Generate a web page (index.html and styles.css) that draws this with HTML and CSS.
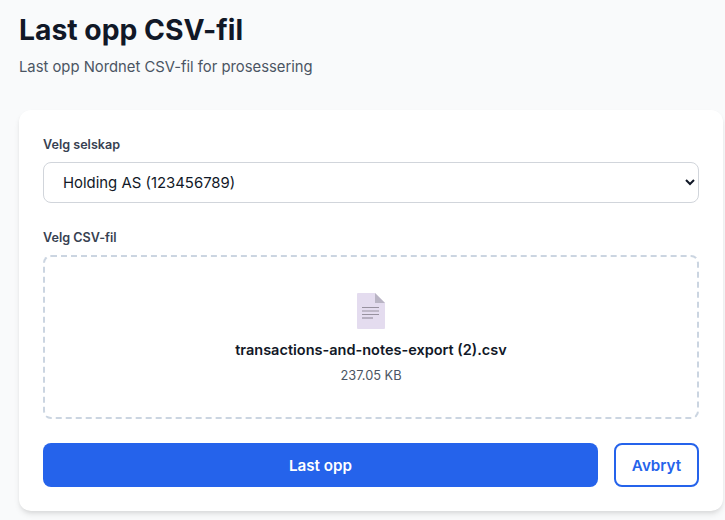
FILE: index.html
```html
<!DOCTYPE html>
<html lang="en">
<head>
  <meta charset="UTF-8">
  <meta name="viewport" content="width=device-width, initial-scale=1.0">
  <title>Last opp CSV-fil</title>
  <link rel="stylesheet" href="styles.css">
</head>
<body>

<div class="page">
  <h1 class="title">Last opp CSV-fil</h1>
  <p class="subtitle">Last opp Nordnet CSV-fil for prosessering</p>

  <form class="card">
    <div class="field">
      <label class="label" for="company">Velg selskap</label>
      <select class="select" id="company">
        <option>Holding AS (123456789)</option>
      </select>
    </div>

    <div class="field">
      <span class="label">Velg CSV-fil</span>
      <div class="dropzone">
        <svg class="file-icon" viewBox="0 0 28 36" aria-hidden="true">
          <path d="M0 1a1 1 0 0 1 1-1h17l10 10v25a1 1 0 0 1-1 1H1a1 1 0 0 1-1-1z" fill="#e4dcef"/>
          <path d="M18 0l10 10H18z" fill="#b9b4c4"/>
          <path d="M5 14.5h17M5 18h17M5 21.5h17" stroke="#97919f" stroke-width="1.2"/>
          <path d="M5 25h11" stroke="#97919f" stroke-width="1.2"/>
        </svg>
        <div class="file-name">transactions-and-notes-export (2).csv</div>
        <div class="file-size">237.05 KB</div>
      </div>
    </div>

    <div class="actions">
      <button type="button" class="btn btn-primary">Last opp</button>
      <button type="button" class="btn btn-outline">Avbryt</button>
    </div>
  </form>
</div>

</body>
</html>
```

FILE: styles.css
```css
* {
  box-sizing: border-box;
}

html, body {
  height: 100%;
}

body {
  margin: 0;
  background-color: #f9fafb;
  font-family: Inter, "Noto Sans", sans-serif;
  overflow: hidden;
}

.page {
  padding: 12px 2px 0 19px;
}

.title {
  margin: 0;
  font-size: 28.3px;
  line-height: 36px;
  font-weight: 700;
  color: #111827;
}

.subtitle {
  margin: 8px 0 0;
  font-size: 14.8px;
  line-height: 22px;
  color: #4b5563;
}

.card {
  margin-top: 32px;
  padding: 24px;
  background-color: #fff;
  border-radius: 12px;
  box-shadow: 0 4px 6px -1px rgba(0, 0, 0, 0.1), 0 2px 4px -1px rgba(0, 0, 0, 0.06);
}

.field {
  margin-bottom: 24px;
}

.label {
  display: block;
  margin-bottom: 6px;
  font-size: 12.6px;
  line-height: 22px;
  font-weight: 600;
  color: #374151;
}

.select {
  display: block;
  width: 100%;
  height: 41px;
  padding: 0 15px;
  background-color: #fff;
  border: 1px solid #d1d5db;
  border-radius: 8px;
  font-family: inherit;
  font-size: 14.9px;
  color: #111827;
}

.dropzone {
  display: flex;
  flex-direction: column;
  align-items: center;
  height: 164px;
  padding-top: 36px;
  border: 2px dashed #cbd5e1;
  border-radius: 8px;
}

.file-icon {
  width: 28px;
  height: 36px;
}

.file-name {
  margin-top: 10px;
  font-size: 14.5px;
  line-height: 22px;
  font-weight: 600;
  color: #111827;
}

.file-size {
  margin-top: 6px;
  font-size: 12.8px;
  line-height: 18px;
  color: #4b5563;
}

.actions {
  display: flex;
  gap: 16px;
}

.btn {
  height: 44px;
  border-radius: 8px;
  font-family: inherit;
  font-size: 15.2px;
  font-weight: 600;
  cursor: pointer;
}

.btn-primary {
  flex: 1;
  background-color: #2563eb;
  border: none;
  color: #fff;
}

.btn-outline {
  width: 85px;
  padding: 0;
  background-color: #fff;
  border: 2px solid #2563eb;
  color: #2563eb;
}
```
